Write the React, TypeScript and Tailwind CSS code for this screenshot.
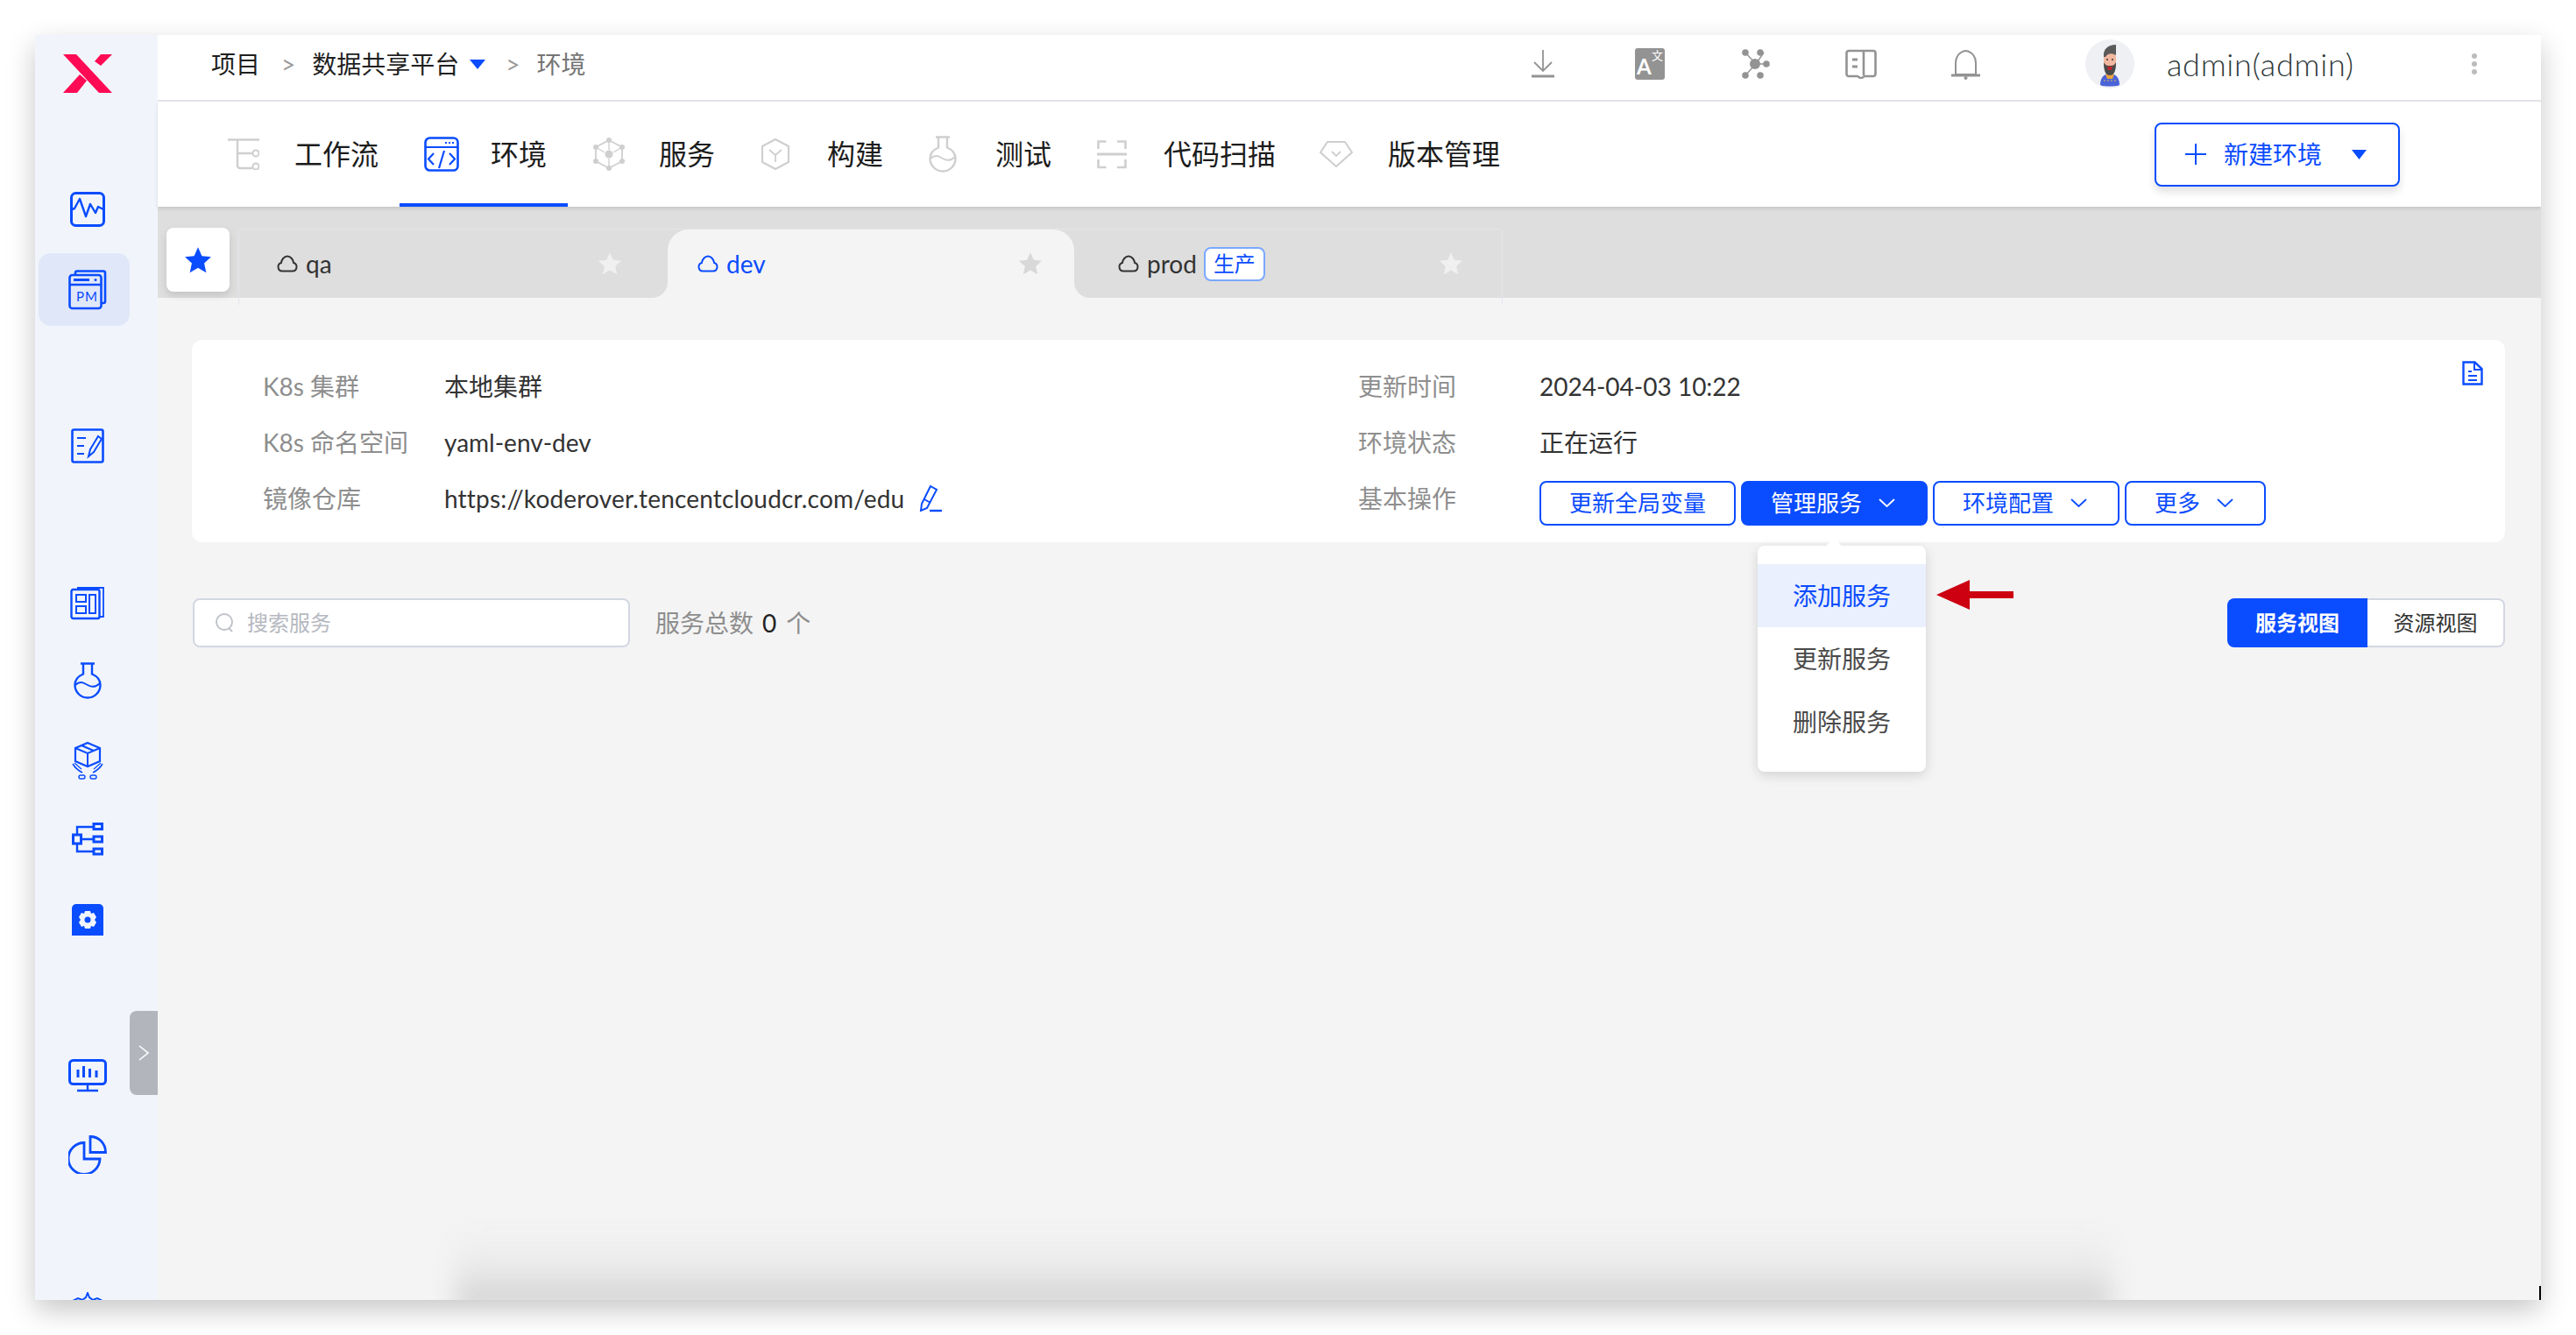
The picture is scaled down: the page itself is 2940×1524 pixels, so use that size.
import type { ReactNode } from 'react';

const BLUE = '#0a4cff';
const GRAY = '#939393';
const PALE = '#cfcfcf';

const Svg = ({ w, h, children, className = '' }: { w: number; h: number; children: ReactNode; className?: string }) => (
  <svg width={w} height={h} viewBox={`0 0 ${w} ${h}`} fill="none" className={`shrink-0 ${className}`}>
    {children}
  </svg>
);

const Logo = () => (
  <Svg w={56} h={44}>
    <path d="M0 0h15l41 44H41z" fill="#ff0a54" />
    <path d="M43 0h13L43 13l-7-5zM19 23l8 7-11 14H0z" fill="#ff0a54" />
  </Svg>
);

const WaveIcon = () => (
  <Svg w={40} h={40}>
    <rect x="1.5" y="1.5" width="37" height="37" rx="5" stroke={BLUE} strokeWidth="3" />
    <path d="M2 20l3-1 6-11 7 20 5-14 6 10 3-7 6 3" stroke={BLUE} strokeWidth="2.4" strokeLinejoin="round" />
  </Svg>
);

const PmIcon = () => (
  <Svg w={44} h={46}>
    <path d="M8 5V3.500A2 2 0 0 1 10 1.500h30a2 2 0 0 1 2 2V36a2 2 0 0 1-2 2h-2" stroke={BLUE} strokeWidth="2.6" />
    <rect x="1.500" y="6" width="36" height="38" rx="3" stroke={BLUE} strokeWidth="2.6" fill="#e0e7f8" />
    <path d="M2 17h35" stroke={BLUE} strokeWidth="2.6" />
    <path d="M6 11.500h18" stroke={BLUE} strokeWidth="3" />
    <circle cx="31" cy="11.500" r="1.500" fill={BLUE} />
    <text x="9" y="36" fontSize="15" fill={BLUE} letterSpacing="1">PM</text>
  </Svg>
);

const NoteIcon = () => (
  <Svg w={38} h={40}>
    <rect x="1.500" y="1.500" width="35" height="37" rx="2" stroke={BLUE} strokeWidth="2.600" />
    <path d="M7 11h10M7 20h8M7 29h8" stroke={BLUE} strokeWidth="2" />
    <path d="M20 32l2-8 9-15 4 3-9 15z" stroke={BLUE} strokeWidth="2" />
  </Svg>
);

const BoardIcon = () => (
  <Svg w={40} h={40}>
    <path d="M8 3h30v33h-4" stroke={BLUE} strokeWidth="1.800" />
    <rect x="1.500" y="5" width="32" height="33" rx="2" stroke={BLUE} strokeWidth="2.400" fill="#f1f5fb" />
    <rect x="7" y="11" width="11" height="8" stroke={BLUE} strokeWidth="2" />
    <rect x="7" y="24" width="11" height="8" stroke={BLUE} strokeWidth="2" />
    <rect x="22" y="11" width="7" height="21" stroke={BLUE} strokeWidth="2" />
  </Svg>
);

const FlaskIcon = ({ color = BLUE, w = 32, h = 42 }: { color?: string; w?: number; h?: number }) => (
  <svg width={w} height={h} viewBox="0 0 32 42" fill="none" className="shrink-0">
    <path d="M8 1.500h16M11 2v11.500C5 16 1.500 20.500 1.500 26c0 8 6.500 14.500 14.500 14.500S30.500 34 30.500 26c0-5.500-3.500-10-9.500-12.500V2" stroke={color} strokeWidth="2.400" />
    <path d="M2 26c5-5 9-3 14 0s10 2 14-2" stroke={color} strokeWidth="2" />
  </svg>
);

const BoxHandsIcon = () => (
  <Svg w={36} h={45}>
    <path d="M18 2l14 6v15l-14 6-14-6V8z" stroke={BLUE} strokeWidth="2.200" />
    <path d="M4 8l14 6 14-6M18 14v15M11 5l14 6" stroke={BLUE} strokeWidth="2" />
    <path d="M1 26c3 5 7 8 11 10M35 26c-3 5-7 8-11 10" stroke={BLUE} strokeWidth="1.600" />
    <path d="M3 25l8 7M33 25l-8 7" stroke={BLUE} strokeWidth="1.200" />
    <rect x="8" y="39" width="7" height="4" rx="2" stroke={BLUE} strokeWidth="1.400" />
    <rect x="21" y="39" width="7" height="4" rx="2" stroke={BLUE} strokeWidth="1.400" />
  </Svg>
);

const FlowIcon = () => (
  <Svg w={36} h={38}>
    <rect x="1.500" y="14" width="9" height="10" stroke={BLUE} strokeWidth="3" />
    <rect x="25" y="1.500" width="9.500" height="6" stroke={BLUE} strokeWidth="3" />
    <rect x="25" y="16" width="9.500" height="6" stroke={BLUE} strokeWidth="3" />
    <rect x="25" y="30" width="9.500" height="6" stroke={BLUE} strokeWidth="3" />
    <path d="M6 14V5h19M6 24v9h19M10 19h15" stroke={BLUE} strokeWidth="2.400" />
  </Svg>
);

const GearBoxIcon = () => (
  <Svg w={36} h={36}>
    <path d="M0 5a5 5 0 0 1 5-5h26a5 5 0 0 1 5 5v31H0z" fill={BLUE} />
    <path d="M15 8h6l1 3 3-1 3 5-2 3 2 3-3 5-3-1-1 3h-6l-1-3-3 1-3-5 2-3-2-3 3-5 3 1z" fill="#f1f5fb" />
    <circle cx="18" cy="18" r="3.500" fill={BLUE} />
  </Svg>
);

const MonitorIcon = () => (
  <Svg w={44} h={38}>
    <rect x="1.500" y="1.500" width="41" height="27" rx="4" stroke={BLUE} strokeWidth="3" />
    <path d="M11 12v9M17.500 8v13M24.500 11v10M32 13v8" stroke={BLUE} strokeWidth="3" />
    <path d="M22 29v6M10 36h24" stroke={BLUE} strokeWidth="2.400" />
  </Svg>
);

const PieIcon = () => (
  <Svg w={44} h={44}>
    <path d="M18 8.500A18 18 0 1 0 36 27H18z" stroke={BLUE} strokeWidth="2.800" />
    <path d="M25 1.500c9.500 0 17.500 7.500 17.500 18H25z" stroke={BLUE} strokeWidth="2.800" />
  </Svg>
);

const WorkflowIcon = () => (
  <Svg w={36} h={36}>
    <path d="M0 1.500h36M11 2v29a3 3 0 0 0 3 3h14M11 17h17" stroke={PALE} strokeWidth="2.400" />
    <circle cx="32" cy="17" r="3.500" stroke={PALE} strokeWidth="2" />
    <circle cx="32" cy="32" r="3.500" stroke={PALE} strokeWidth="2" />
  </Svg>
);

const EnvIcon = () => (
  <Svg w={40} h={40}>
    <rect x="1.500" y="1.500" width="37" height="37" rx="5" stroke={BLUE} strokeWidth="2.600" />
    <path d="M2 12h36" stroke={BLUE} strokeWidth="2" />
    <path d="M24 7h2M28 7h2M32 7h2" stroke={BLUE} strokeWidth="2" />
    <path d="M11 19l-6 6.500 6 6.500M29 19l6 6.500-6 6.500M23 16l-6 20" stroke={BLUE} strokeWidth="2.200" />
  </Svg>
);

const ServiceIcon = () => (
  <Svg w={38} h={40}>
    <path d="M19 4l15 8v16l-15 8-15-8V12z" stroke={PALE} strokeWidth="1.800" />
    <path d="M19 4v11M19 25v11M4 12l10 6M34 12l-10 6" stroke={PALE} strokeWidth="1.400" />
    <circle cx="19" cy="20" r="4.500" fill={PALE} />
    <g fill={PALE}>
      <circle cx="19" cy="4" r="3" />
      <circle cx="19" cy="36" r="3" />
      <circle cx="4" cy="12" r="3" />
      <circle cx="34" cy="12" r="3" />
      <circle cx="4" cy="28" r="3" />
      <circle cx="34" cy="28" r="3" />
    </g>
  </Svg>
);

const BuildIcon = () => (
  <Svg w={34} h={38}>
    <path d="M17 2l15 8v18l-15 8-15-8V10z" stroke={PALE} strokeWidth="2.200" strokeLinejoin="round" />
    <path d="M10 14l7 6 7-6M17 20v8" stroke={PALE} strokeWidth="1.800" />
  </Svg>
);

const ScanIcon = () => (
  <Svg w={34} h={34}>
    <path d="M1.500 11V2.500h9M23 2.500h9.500V11M1.500 23v9h9M23 32h9.500v-9" stroke={PALE} strokeWidth="2.600" />
    <path d="M0 17h34" stroke={PALE} strokeWidth="3" />
  </Svg>
);

const VersionIcon = () => (
  <Svg w={40} h={32} className="-ml-[3px]">
    <path d="M10 2h20l8 12-18 16L2 14z" stroke={PALE} strokeWidth="2.200" strokeLinejoin="round" />
    <path d="M15 13l5 5 5-5" stroke={PALE} strokeWidth="1.800" />
  </Svg>
);

const DownloadIcon = () => (
  <Svg w={30} h={32}>
    <path d="M15 0v24M5 14l10 10 10-10" stroke={GRAY} strokeWidth="1.800" />
    <path d="M2 30h26" stroke={GRAY} strokeWidth="3" />
  </Svg>
);

const TranslateIcon = () => (
  <div className="relative flex h-[36px] w-[34px] shrink-0 items-end rounded-[3px] bg-[#939393] pb-[3px] pl-[2px]">
    <span className="text-[24px] leading-none font-bold text-white">A</span>
    <span className="absolute top-[2px] right-[2px] text-[13px] leading-none text-white">文</span>
  </div>
);

const NetworkIcon = () => (
  <Svg w={33} h={34}>
    <path d="M5 4l12 13M5 30l12-13M26 4L17 17M29 17H17" stroke={GRAY} strokeWidth="1.400" />
    <g fill={GRAY}>
      <circle cx="16" cy="17" r="6" />
      <circle cx="5" cy="4" r="3.800" />
      <circle cx="5" cy="30" r="3.800" />
      <circle cx="22" cy="4" r="3.800" />
      <circle cx="22" cy="30" r="3.800" />
      <circle cx="29" cy="17" r="3.800" />
    </g>
  </Svg>
);

const BookIcon = () => (
  <Svg w={36} h={34}>
    <path d="M18 2H4a2.500 2.500 0 0 0-2.500 2.500v24A2.500 2.500 0 0 0 4 31h10l4 2.500 4-2.500h10a2.500 2.500 0 0 0 2.500-2.500v-24A2.500 2.500 0 0 0 32 2H18zM21 2v28" stroke={GRAY} strokeWidth="2.600" />
    <path d="M8 12h6M8 20h6" stroke={GRAY} strokeWidth="3" />
  </Svg>
);

const BellIcon = () => (
  <Svg w={35} h={35}>
    <path d="M17.500 2C10 3 6 9 6 16v13h23V16c0-7-4-13-11.500-14z" stroke={GRAY} strokeWidth="2" />
    <path d="M1 30h33" stroke={GRAY} strokeWidth="3" />
    <circle cx="17.500" cy="33" r="2" fill={GRAY} />
  </Svg>
);

const Avatar = () => (
  <svg width="56" height="56" viewBox="0 0 56 56" className="shrink-0">
    <circle cx="28" cy="28" r="28" fill="#eef0f4" />
    <path d="M17 52c0-9 5-13 11-13s11 4 11 13c-3 2-19 2-22 0z" fill="#4a63d8" />
    <path d="M23 40h10l-2 5h-6z" fill="#e8a33d" />
    <g fill="#e8c84a">
      <circle cx="22" cy="47" r=".8" />
      <circle cx="26" cy="47" r=".8" />
      <circle cx="30" cy="47" r=".8" />
      <circle cx="34" cy="47" r=".8" />
    </g>
    <rect x="21" y="14" width="14" height="22" rx="6" fill="#f3b79f" />
    <path d="M21 26c0 12 3 15 7 15s7-3 7-15c-2 4-4 4-7 4s-5 0-7-4z" fill="#4a4a4a" />
    <path d="M25 31h6l-1 4h-4z" fill="#c0232a" />
    <path d="M21 20c-1-9 5-14 14-14v12c-5-3-10-2-12 2z" fill="#5a5a5a" />
    <circle cx="25" cy="23" r="1" fill="#333" />
    <circle cx="31" cy="23" r="1" fill="#333" />
  </svg>
);

const Tri = ({ w, h }: { w: number; h: number }) => (
  <svg width={w} height={h} viewBox="0 0 10 8" preserveAspectRatio="none" className="shrink-0">
    <path d="M0 0h10L5 8z" fill={BLUE} />
  </svg>
);

const Chevron = ({ color }: { color: string }) => (
  <svg width="19" height="10" viewBox="0 0 19 10" fill="none" className="ml-[19px] shrink-0">
    <path d="M1 1l8.500 8L18 1" stroke={color} strokeWidth="1.800" />
  </svg>
);

const Cloud = ({ color }: { color: string }) => (
  <svg width="24" height="20" viewBox="0 0 24 20" fill="none" className="shrink-0">
    <path d="M6.500 18.500C3.500 18.500 1.500 16.500 1.500 13.500 1.500 11 3 9.500 5 9c.5-4 3.500-7.500 7-7.500S18.500 5 19 9c2 .5 3.500 2 3.500 4.500 0 3-2 5-5 5z" stroke={color} strokeWidth="2" />
  </svg>
);

const Star = ({ color, size = 28 }: { color: string; size?: number }) => (
  <svg width={size} height={size} viewBox="0 0 24 24" className="shrink-0">
    <path d="M12 1l3.300 7.400 7.900.8-5.900 5.400 1.700 8L12 18.500 5 22.600l1.700-8L.8 9.200l7.900-.8z" fill={color} />
  </svg>
);

const NAV = [
  { label: '工作流', icon: <WorkflowIcon /> },
  { label: '环境', icon: <EnvIcon />, active: true },
  { label: '服务', icon: <ServiceIcon /> },
  { label: '构建', icon: <BuildIcon /> },
  { label: '测试', icon: <FlaskIcon color={PALE} /> },
  { label: '代码扫描', icon: <ScanIcon /> },
  { label: '版本管理', icon: <VersionIcon /> },
];

const Sidebar = () => (
  <aside className="relative flex h-full w-[140px] shrink-0 flex-col items-center bg-[#f1f5fb] pr-[20px] pt-[22px] *:shrink-0">
    <Logo />
    <div className="mt-[113px]"><WaveIcon /></div>
    <div className="-ml-[8px] mt-[30px] flex h-[83px] w-[104px] items-center justify-center rounded-[14px] bg-[#e0e7f8]">
      <div className="ml-[8px]"><PmIcon /></div>
    </div>
    <div className="mt-[117px]"><NoteIcon /></div>
    <div className="mt-[139px]"><BoardIcon /></div>
    <div className="mt-[48px]"><FlaskIcon /></div>
    <div className="mt-[48px]"><BoxHandsIcon /></div>
    <div className="mt-[48px]"><FlowIcon /></div>
    <div className="mt-[55px]"><GearBoxIcon /></div>
    <div className="mt-[141px]"><MonitorIcon /></div>
    <div className="mt-[49px]"><PieIcon /></div>
    <div className="mt-[135px]">
      <svg width="36" height="30" viewBox="0 0 36 30" fill="none">
        <path d="M1 10l6-3 5 2 4-3 2-5 2 5 4 3 5-2 6 3" stroke={BLUE} strokeWidth="2" />
      </svg>
    </div>
    <div className="absolute top-[1114px] left-[108px] flex h-[96px] w-[32px] items-center justify-center rounded-l-[8px] bg-[#b2b5bc]">
      <svg width="12" height="20" viewBox="0 0 12 20" fill="none">
        <path d="M1 2l10 8-10 8" stroke="#ffffff" strokeWidth="1.600" />
      </svg>
    </div>
  </aside>
);

const Header = () => (
  <header className="flex h-[76px] shrink-0 items-center border-b-2 border-[#e3e5ea] bg-white pb-[8px] pl-[61px] pr-[72px] text-[28px]">
    <span className="text-[#1f1f1f]">项目</span>
    <span className="ml-[24px] text-[#9a9a9a]">&gt;</span>
    <span className="ml-[19px] text-[#1f1f1f]">数据共享平台</span>
    <span className="ml-[12px]"><Tri w={18} h={11} /></span>
    <span className="ml-[23px] text-[#9a9a9a]">&gt;</span>
    <span className="ml-[19px] text-[#757575]">环境</span>
    <div className="ml-auto flex items-center">
      <DownloadIcon />
      <div className="ml-[90px]"><TranslateIcon /></div>
      <div className="ml-[87px]"><NetworkIcon /></div>
      <div className="ml-[86px]"><BookIcon /></div>
      <div className="ml-[84px]"><BellIcon /></div>
      <div className="ml-[119px]"><Avatar /></div>
      <span className="ml-[37px] w-[217px] whitespace-nowrap text-[36px] font-light tracking-[0.7px] text-[#2f3a3a]">admin(admin)</span>
      <svg width="8" height="26" viewBox="0 0 8 26" className="ml-[130px]">
        <circle cx="4" cy="4" r="3" fill="#bcbcbc" />
        <circle cx="4" cy="13" r="3" fill="#bcbcbc" />
        <circle cx="4" cy="22" r="3" fill="#bcbcbc" />
      </svg>
    </div>
  </header>
);

const NavBar = () => (
  <nav className="relative z-10 flex h-[120px] shrink-0 items-stretch bg-white pl-[52px] pr-[161px] shadow-[0_2px_4px_rgba(0,0,0,0.12)]">
    {NAV.map((item) => (
      <div
        key={item.label}
        className={`flex items-center border-b-[4px] pb-[2px] pl-[28px] pr-[24px] pt-[6px] ${item.active ? 'border-[#0a4cff]' : 'border-transparent'}`}
      >
        <div className="flex w-[76px] items-center">{item.icon}</div>
        <span className="text-[32px] text-[#1c1c1c]">{item.label}</span>
      </div>
    ))}
    <div className="ml-auto flex items-center">
      <button className="flex h-[73px] w-[280px] items-center rounded-[8px] border-2 border-[#0a4cff] bg-white pl-[33px] text-[28px] text-[#0a4cff] shadow-[0_6px_10px_rgba(0,0,0,0.12)]">
        <svg width="24" height="24" viewBox="0 0 24 24" fill="none" className="shrink-0">
          <path d="M12 0v24M0 12h24" stroke={BLUE} strokeWidth="2" />
        </svg>
        <span className="ml-[20px]">新建环境</span>
        <span className="ml-[34px]"><Tri w={17} h={11} /></span>
      </button>
    </div>
  </nav>
);

const EnvTabs = () => (
  <div className="flex h-[104px] shrink-0 bg-[#dedede] pl-[10px]">
    <div className="relative z-10 mt-[24px] flex h-[73px] w-[72px] items-center justify-center rounded-[8px] bg-white shadow-[0_4px_8px_rgba(0,0,0,0.12)]">
      <Star color={BLUE} size={32} />
    </div>
    <div className="ml-[10px] mt-[25px] flex h-[87px] items-start rounded-t-[6px] border-x border-t border-[#e2e5ec]">
      <div className="flex h-[78px] w-[489px] items-center pl-[43px] pr-[52px]">
        <Cloud color="#333333" />
        <span className="ml-[9px] text-[28px] text-[#333333]">qa</span>
        <span className="ml-auto"><Star color="#f0f0f0" /></span>
      </div>
      <div className="relative flex h-[78px] w-[464px] items-center rounded-t-[24px] bg-[#f4f4f4] pl-[34px] pr-[36px]">
        <span className="absolute bottom-0 -left-[18px] h-[18px] w-[18px] bg-[#f4f4f4]">
          <span className="block h-full w-full rounded-br-[18px] bg-[#dedede]" />
        </span>
        <span className="absolute bottom-0 -right-[18px] h-[18px] w-[18px] bg-[#f4f4f4]">
          <span className="block h-full w-full rounded-bl-[18px] bg-[#dedede]" />
        </span>
        <Cloud color={BLUE} />
        <span className="ml-[9px] text-[28px] text-[#0a4cff]">dev</span>
        <span className="ml-auto"><Star color="#d8d8d8" /></span>
      </div>
      <div className="flex h-[78px] w-[488px] items-center pl-[50px] pr-[44px]">
        <Cloud color="#333333" />
        <span className="ml-[9px] text-[28px] text-[#333333]">prod</span>
        <span className="ml-[8px] flex h-[39px] w-[70px] items-center justify-center rounded-[8px] border-2 border-[#7aa8ff] bg-white text-[24px] text-[#0a4cff]">生产</span>
        <span className="ml-auto"><Star color="#f0f0f0" /></span>
      </div>
    </div>
  </div>
);

const Label = ({ children }: { children: ReactNode }) => <span className="text-[#8e8e8e]">{children}</span>;
const Value = ({ children }: { children: ReactNode }) => <span className="flex items-center text-[#333333]">{children}</span>;

const ActionButton = ({ label, chevron = true, filled = false }: { label: string; chevron?: boolean; filled?: boolean }) => (
  <button
    className={`flex h-[51px] items-center rounded-[8px] border-2 border-[#0a4cff] pl-[32px] text-[26px] ${chevron ? 'pr-[35px]' : 'pr-[32px]'} ${filled ? 'bg-[#0a4cff] text-white' : 'bg-white text-[#0a4cff]'}`}
  >
    {label}
    {chevron && <Chevron color={filled ? '#ffffff' : BLUE} />}
  </button>
);

const InfoCard = () => (
  <section className="relative grid h-[231px] grid-cols-[207px_1043px_207px_1fr] grid-rows-[64px_64px_64px] items-center rounded-[12px] bg-white pl-[81px] pt-[21px] text-[28px]">
    <Label>K8s 集群</Label>
    <Value>本地集群</Value>
    <Label>更新时间</Label>
    <Value>2024-04-03 10:22</Value>
    <Label>K8s 命名空间</Label>
    <Value>yaml-env-dev</Value>
    <Label>环境状态</Label>
    <Value>正在运行</Value>
    <Label>镜像仓库</Label>
    <Value>
      <span className="tracking-[0.18px]">https://koderover.tencentcloudcr.com/edu</span>
      <svg width="30" height="32" viewBox="0 0 30 32" fill="none" className="ml-[15px] shrink-0">
        <path d="M15 2l7 4-11 21-7 3 1-8zM8 17l7 4" stroke={BLUE} strokeWidth="2" />
        <path d="M14 30h14" stroke={BLUE} strokeWidth="2.400" />
      </svg>
    </Value>
    <Label>基本操作</Label>
    <div className="mt-[10px] flex gap-[6px]">
      <ActionButton label="更新全局变量" chevron={false} />
      <ActionButton label="管理服务" filled />
      <ActionButton label="环境配置" />
      <ActionButton label="更多" />
    </div>
    <svg width="24" height="28" viewBox="0 0 24 28" fill="none" className="absolute top-[24px] right-[25px]">
      <path d="M1.500 1.500h13L22.500 9v17.500h-21z" stroke={BLUE} strokeWidth="2.400" />
      <path d="M14 2v8h8M7 12h4M7 17h10M7 22h10" stroke={BLUE} strokeWidth="2" />
    </svg>
  </section>
);

const Dropdown = () => (
  <div className="absolute top-[283px] left-[1826px] z-20 h-[258px] w-[192px] rounded-[8px] bg-white py-[21px] text-[28px] text-[#4a4a4a] shadow-[0_4px_14px_rgba(0,0,0,0.14)]">
    <span className="absolute -top-[11px] left-[78px] h-0 w-0 border-x-[9px] border-b-[12px] border-x-transparent border-b-white" />
    <div className="flex h-[72px] items-center bg-[#eaf0fd] pl-[40px] text-[#0a4cff]">添加服务</div>
    <div className="flex h-[72px] items-center pl-[40px]">更新服务</div>
    <div className="flex h-[72px] items-center pl-[40px]">删除服务</div>
    <svg width="88" height="34" viewBox="0 0 88 34" className="absolute top-[39px] left-[204px]">
      <path d="M0 17L38 0v13h50v8H38v13z" fill="#cc0011" />
    </svg>
  </div>
);

const Toolbar = () => (
  <div className="mt-[64px] flex h-[56px] items-center pl-[1px]">
    <div className="flex h-[56px] w-[499px] items-center rounded-[8px] border-2 border-[#d3d7e2] bg-white pl-[23px] text-[24px] text-[#b5b8c0]">
      <svg width="22" height="24" viewBox="0 0 22 24" fill="none" className="shrink-0">
        <circle cx="11" cy="11" r="9" stroke="#c0c3cb" strokeWidth="2" />
        <path d="M16 18l4 4" stroke="#c0c3cb" strokeWidth="2" />
      </svg>
      <span className="ml-[15px]">搜索服务</span>
    </div>
    <span className="ml-[29px] text-[28px] text-[#8e8e8e]">服务总数</span>
    <span className="ml-[10px] text-[28px] text-[#222222]">0</span>
    <span className="ml-[11px] text-[28px] text-[#8e8e8e]">个</span>
    <div className="ml-auto flex h-[56px] text-[24px] font-semibold">
      <div className="flex w-[160px] items-center justify-center rounded-l-[8px] bg-[#0a4cff] text-white">服务视图</div>
      <div className="flex w-[157px] items-center justify-center rounded-r-[8px] border-2 border-l-0 border-[#d3d7e2] bg-white font-normal text-[#333333]">资源视图</div>
    </div>
  </div>
);

const App = () => (
  <div className="h-[1524px] w-[2940px] overflow-hidden bg-white p-[40px] font-['Lato','Noto_Sans_CJK_SC',sans-serif]">
    <div className="flex h-[1444px] w-[2860px] overflow-hidden bg-[#f4f4f4] shadow-[0_12px_30px_rgba(0,0,0,0.22)]">
      <Sidebar />
      <main className="relative flex min-w-0 flex-1 flex-col">
        <Header />
        <NavBar />
        <EnvTabs />
        <div className="relative px-[39px] pr-[41px] pt-[48px]">
          <InfoCard />
          <Toolbar />
          <Dropdown />
        </div>
        <div className="absolute -bottom-[12px] left-[340px] h-[96px] w-[1890px] bg-gradient-to-t from-[#cccccc] via-[#eaeaea] to-transparent blur-[14px]" />
        <span className="absolute right-0 bottom-0 h-[16px] w-[2px] bg-black" />
      </main>
    </div>
  </div>
);

export default App;
